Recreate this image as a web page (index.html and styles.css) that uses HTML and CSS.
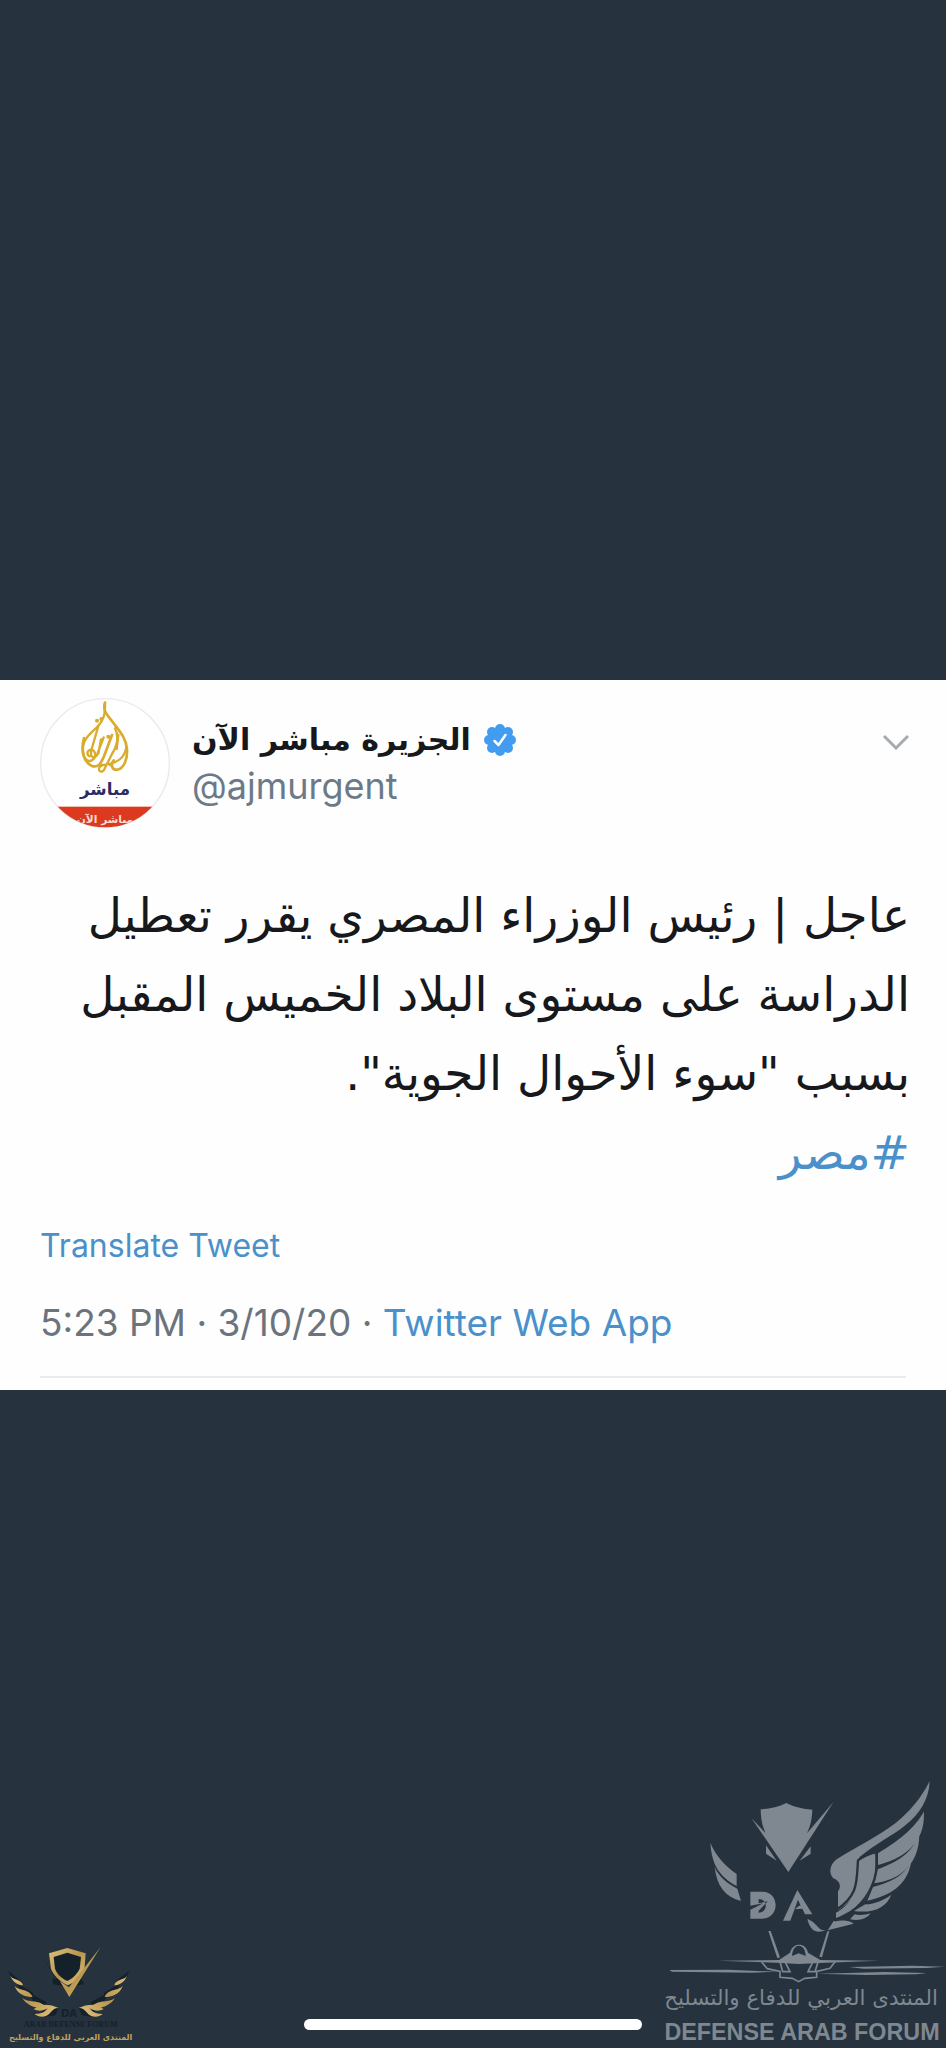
FILE: index.html
```html
<!DOCTYPE html>
<html lang="en">
<head>
<meta charset="utf-8">
<meta name="viewport" content="width=device-width, initial-scale=1">
<title>Tweet</title>
<link rel="stylesheet" href="styles.css">
</head>
<body>
<main class="viewer">
  <article class="tweet">
    <header class="author">
      <svg class="avatar" viewBox="0 0 390 390" role="img" aria-label="الجزيرة مباشر">
        <defs><clipPath id="disc"><circle cx="195" cy="195" r="193"/></clipPath></defs>
        <circle cx="195" cy="195" r="193" fill="#fff" stroke="#e9eaec" stroke-width="4"/>
        <g clip-path="url(#disc)">
          <rect y="326" width="390" height="70" fill="#dc3a1f"/>
          <text class="avatar-strip" x="195" y="374" text-anchor="middle">مباشر الآن</text>
        </g>
        <g fill="none" stroke="#d9ab2e" stroke-linecap="round" stroke-linejoin="round">
          <path stroke-width="8" d="M195 14c-8 25 8 38 23 58 22 29 41 49 43 82 2 31-10 58-29 61-17 2-21-16-11-28"/>
          <path stroke-width="7" d="M195 14c1 34-3 52-25 75-25 22-43 39-41 68 1 25 14 38 28 29 17-11 6-36-8-30-12 6-6 21 3 18"/>
          <path stroke-width="8" d="M132 120c-10 35-3 70 22 83 21 9 29-8 38-28l24-64"/>
          <path stroke-width="7" d="M225 91c13 26 8 49-8 75l-24 48c-9 15-23 3-12-9 10-10 24-2 45-13 23-10 30-25 33-44M175 84l-20 69c-6 22 3 32 15 20l21-55M235 111l-5 42M183 124l-8 43"/>
        </g>
        <g fill="#d9ab2e"><circle cx="171" cy="68" r="6"/><circle cx="184" cy="63" r="6"/><circle cx="182" cy="202" r="6"/><circle cx="211" cy="200" r="5"/><circle cx="205" cy="116" r="6"/></g>
        <text class="avatar-name" x="195" y="290" text-anchor="middle">مباشر</text>
      </svg>
      <div class="identity">
        <div class="name-row">
          <strong class="name" dir="rtl" lang="ar">الجزيرة مباشر الآن</strong>
          <svg class="badge" viewBox="0 0 34 34" role="img" aria-label="Verified account">
            <g fill="#429cf0"><circle cx="17" cy="17" r="13"/><circle cx="17" cy="6" r="5"/><circle cx="25" cy="9" r="5"/><circle cx="28" cy="17" r="5"/><circle cx="25" cy="25" r="5"/><circle cx="17" cy="28" r="5"/><circle cx="9" cy="25" r="5"/><circle cx="6" cy="17" r="5"/><circle cx="9" cy="9" r="5"/></g>
            <path d="M11.5 18l4 4 7-10" fill="none" stroke="#fff" stroke-width="2.5" stroke-linecap="round" stroke-linejoin="round"/>
          </svg>
        </div>
        <a class="handle" href="#profile">@ajmurgent</a>
      </div>
      <button class="more" type="button" aria-label="More options">
        <svg class="chevron" viewBox="0 0 28 16"><path d="M2 2l12 12L26 2" fill="none" stroke="#a3abb3" stroke-width="3"/></svg>
      </button>
    </header>
    <p class="message" dir="rtl" lang="ar">عاجل | رئيس الوزراء المصري يقرر تعطيل<br>الدراسة على مستوى البلاد الخميس المقبل<br>بسبب "سوء الأحوال الجوية".<br><a class="link" href="#egypt">#مصر</a></p>
    <button class="translate" type="button">Translate Tweet</button>
    <p class="meta">5:23 PM · 3/10/20 · <a class="link" href="#source">Twitter Web App</a></p>
  </article>
  <footer class="marks">
    <svg class="mark-gold" viewBox="0 0 480 354" role="img" aria-label="Arab Defense Forum">
      <defs>
        <linearGradient id="gold" x1="0" y1="0" x2="1" y2="1"><stop offset="0" stop-color="#e0c078"/><stop offset=".5" stop-color="#b8964f"/><stop offset="1" stop-color="#e3c47e"/></linearGradient>
        <g id="laurel">
          <path fill="#14212b" d="M24 122l44 35-4 10-33-30zM50 158l49 30 3 14-35-10zM88 189l50 26 6 16-40-8zM130 218l46 16-10 22-40 6z"/>
          <path fill="url(#gold)" d="M31 137c6 13 35 10 38 29-16-1-29-8-38-29zM43 166c8 17 43 9 55 34-22 4-47-9-55-34zM67 203c17 17 49 3 70 27-26 8-57-3-70-27zM101 238c20-19 48-16 75-4-23-1-24 26-48 26-13 0-20-4-24-8 18 0 29-4 39-17-13 8-27 10-42 3z"/>
        </g>
      </defs>
      <use href="#laurel"/>
      <use href="#laurel" transform="translate(412 0) scale(-1 1)"/>
      <path fill="#14212b" d="M127 80l28 43 36 45-32-5-2-18 12 4zM242 143l10 20-31 5z"/>
      <path fill="url(#gold)" d="M147 70l55-16 55 16-4 52c-10 20-28 34-50 44-29-14-45-35-50-49z"/>
      <path fill="#14212b" d="M161 81l41-13 41 13-4 35c-7 14-18 27-37 37-22-11-32-24-37-37z"/>
      <path fill="url(#gold)" d="M302 51l-94 150-28-47 27 18z"/>
      <text class="gold-initials" x="207" y="260" text-anchor="middle">DA</text>
      <text class="gold-latin" x="212" y="292" text-anchor="middle">ARAB DEFENSE FORUM</text>
      <text class="gold-arabic" x="212" y="330" text-anchor="middle">المنتدى العربي للدفاع والتسليح</text>
    </svg>
    <div class="home-bar"></div>
    <svg class="mark-gray" viewBox="0 0 888 834" role="img" aria-label="Defense Arab Forum">
      <g fill="#7f8790">
        <path d="M332 118c29-2 54-7 77-19 25 12 48 18 78 20-1 27-5 48-16 71l80-95-136 211-111-162 42 45c-11-26-14-49-14-71zM348 226l32 46-32-21zM482 229v22l-33 21z"/>
        <path d="M181 218c17 41 45 70 79 94v36c-54-30-75-66-79-130zM194 291c12 28 36 49 68 65l11 37c-46-11-73-44-79-102z"/>
        <path d="M839 33c-2 57-31 99-72 132-39 32-91 56-139 97-9 49 3 91-22 121-9 14-23 25-42 38v-57c11-13 6-32-14-39-18-19-7-49 16-61 50-31 120-66 171-105 41-35 73-68 102-126z"/>
        <path d="M821 118c8 82-36 141-137 167v-35c59-37 106-67 137-132zM808 196c-2 86-55 134-136 144l11-42c58-21 101-47 125-102zM783 280c-13 66-62 98-131 112l17-41c51-12 88-32 114-71zM724 374c-15 38-52 57-113 49l35-20c31-1 55-13 78-29z"/>
        <path d="M676 251c7 112-32 165-118 193v-16c44-24 63-56 68-161 14-9 28-14 50-16zM662 430c-13 18-35 23-62 18l14-15c16 4 32 1 48-3zM551 453c24 0 40-7 60 8l-78 20z"/>
        <path d="M301 365h37c52 0 52 81-1 81h-36v-27l39-19-39 7zm25 22v13l27-6-27 28v6c28 0 29-41 0-41zM442 360l45 73h-22l-8-17-22 2 12-11h5l-8-18-23 63h-22z" fill-rule="evenodd"/>
        <path d="M472 447c33 13 29 35 56 34-28 9-46 5-56-34zM355 483h7l28 79-8 3zM532 484h6l-22 78-8-2z"/>
        <path fill-rule="evenodd" d="M204 572l183-2 33-22c8-32 48-31 54 0l37 22 176 2-176 7-65 3-67-4zm222-14l20-8 21 8c-1-39-38-42-41 0z"/>
        <path d="M58 600l178-1 145 6-74 3-241-3zM597 591l190-4 97 3-54 4-190 2zM500 611l205-5 125 3-30 4-150 2z"/>
      </g>
      <path fill="none" stroke="#26323e" stroke-width="7" d="M824 112c-26 60-78 90-145 133-24 8-40 14-55 26-5 60 4 104-66 149M680 244v46c-3 50-32 105-78 136l-48 26"/>
      <path fill="none" stroke="#7f8790" stroke-width="5" d="M335 576l17 20 38 8v18l37 3 19 10 18-10 36-3v-18l40-9 17-22M390 575l8 30h22l-14-28M505 573l-10 32h-21l15-30"/>
      <text class="gray-arabic" x="453" y="705" text-anchor="middle">المنتدى العربي للدفاع والتسليح</text>
      <text class="gray-latin" x="456" y="811" text-anchor="middle">DEFENSE ARAB FORUM</text>
    </svg>
  </footer>
</main>
</body>
</html>
```
FILE: styles.css
```css
* { box-sizing: border-box; }

body {
  margin: 0;
  background: #26323e;
  font-family: Inter, "DejaVu Sans", sans-serif;
}

.viewer {
  display: grid;
  grid-template-rows: 680px auto 1fr;
  min-height: 100vh;
}

.tweet {
  grid-row: 2;
  display: flex;
  flex-direction: column;
  align-items: flex-start;
  padding: 18px 36px 12px 40px;
  background: #fefefe;
  color: #16181b;
}

.author {
  display: flex;
  align-items: flex-start;
  gap: 22px;
  width: 100%;
}

.avatar { width: 130px; height: 130px; flex: none; }

.avatar-strip { font: bold 32px "DejaVu Sans", sans-serif; fill: #fbd9cf; }
.avatar-name { font: bold 50px "DejaVu Sans", sans-serif; fill: #2c2b63; }

.identity { flex: 1; padding-top: 18px; }

.name-row { display: flex; align-items: center; gap: 12px; height: 48px; }

.name { font: bold 30px/48px "DejaVu Sans", sans-serif; white-space: nowrap; }

.badge { width: 34px; height: 34px; flex: none; }

.handle {
  color: #6c7a87;
  font-size: 36px;
  line-height: 44px;
  text-decoration: none;
}

.more {
  margin-top: 36px;
  padding: 0;
  border: 0;
  background: none;
}

.chevron { display: block; width: 28px; height: 16px; }

.message {
  align-self: stretch;
  margin: 48px 0 0;
  font: 47px/79px "DejaVu Sans", sans-serif;
  white-space: nowrap;
}

.link { color: #4a90cb; text-decoration: none; }

.translate {
  margin-top: 34px;
  padding: 0;
  border: 0;
  background: none;
  color: #4a90cb;
  font: 32px/40px Inter, sans-serif;
}

.meta {
  align-self: stretch;
  margin: 32px 4px 0 0;
  padding-bottom: 28px;
  border-bottom: 2px solid #e9ebec;
  color: #6b747d;
  font-size: 37px;
  line-height: 50px;
}

.marks {
  grid-row: 3;
  align-self: end;
  display: grid;
  grid-template-columns: 1fr auto 1fr;
  align-items: end;
}

.mark-gold { width: 160px; height: 118px; }
.mark-gray { width: 296px; height: 278px; justify-self: end; }

.home-bar {
  width: 338px;
  height: 11px;
  margin-bottom: 18px;
  border-radius: 6px;
  background: #fff;
}

.gold-initials { font: bold 30px "DejaVu Sans", sans-serif; fill: #14212b; }
.gold-latin { font: bold 24px "Liberation Serif", serif; fill: #14212b; }
.gold-arabic { font: bold 24px "DejaVu Sans", sans-serif; fill: #c2a25c; }
.gray-arabic { font: 64px "DejaVu Sans", sans-serif; fill: #7f8790; }
.gray-latin { font: bold 70px "Liberation Sans", sans-serif; fill: #7f8790; }
```
